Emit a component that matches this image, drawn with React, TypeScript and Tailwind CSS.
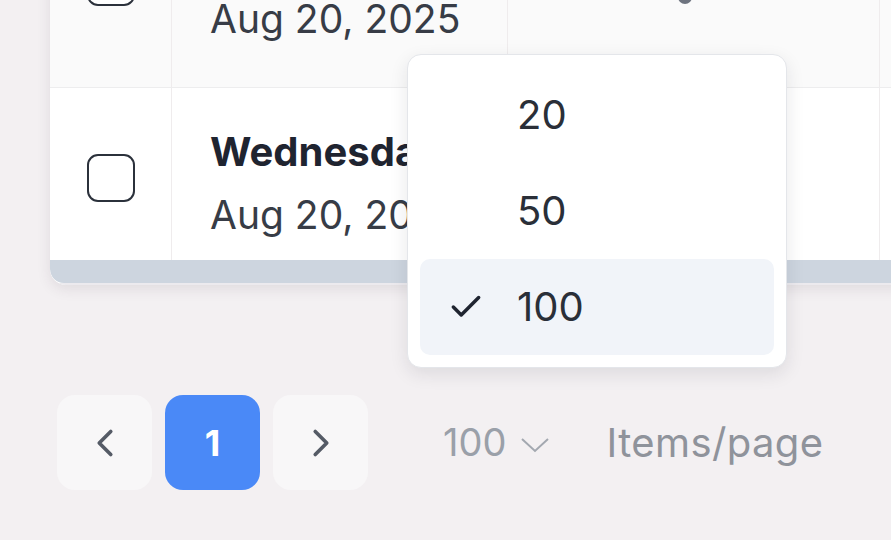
import { Check, ChevronLeft, ChevronRight } from "lucide-react";

const font = { fontFamily: "Inter, 'Noto Sans', sans-serif" };

const Checkbox = () => (
  <div className="w-[48px] h-[48px] rounded-[11px] border-[2.5px] border-[#2b313b] bg-white" />
);

const Row = ({ title, date, tinted }: { title: string; date: string; tinted?: boolean }) => (
  <div className={`flex h-[196px] shrink-0 border-b border-[#ededee] ${tinted ? "bg-[#fafafa]" : "bg-white"}`}>
    <div className="w-[122px] shrink-0 flex justify-center pt-[66px] border-r border-[#efeced]">
      <Checkbox />
    </div>
    <div className="w-[336px] shrink-0 pl-[38px] pt-[40px] border-r border-[#efeced] overflow-hidden whitespace-nowrap">
      <div className="text-[40px] leading-[48px] font-bold text-[#1f2430]">{title}</div>
      <div className="mt-[16px] text-[39px] leading-[46px] text-[#373c46]">{date}</div>
    </div>
    <div className="w-[372px] shrink-0 relative border-r border-[#efeced]">
      {tinted && (
        <div className="absolute left-[170px] top-[100px] w-[14px] h-[12px] rounded-b-full bg-[#4b5260] opacity-80" />
      )}
    </div>
    <div className="flex-1" />
  </div>
);

const MenuItem = ({ label, active }: { label: string; active?: boolean }) => (
  <div className={`flex items-center h-[96px] rounded-[10px] pl-[27px] ${active ? "bg-[#f1f4f9]" : ""}`}>
    <div className="w-[70px] shrink-0">
      {active && <Check size={38} strokeWidth={2.2} className="text-[#1f2430]" />}
    </div>
    <span className="text-[40px] text-[#2a2f38]">{label}</span>
  </div>
);

export default function App() {
  return (
    <div style={font} className="relative w-[891px] h-[540px] overflow-hidden bg-[#f3f0f2]">
      <div className="-mt-[108px] ml-[50px] w-[880px] rounded-b-[16px] bg-white shadow-[0_4px_14px_rgba(60,40,60,0.10)] overflow-hidden">
        <div className="h-[368px] flex flex-col overflow-hidden">
          <Row title="Tuesday" date="Aug 20, 2025" tinted />
          <Row title="Wednesday" date="Aug 20, 2025" />
        </div>
        <div className="h-[23px] bg-[#cdd5df] rounded-bl-[14px]" />
        <div className="h-[2px] bg-[#eceaee]" />
      </div>

      <div className="absolute left-[407px] top-[54px] w-[380px] h-[314px] p-[12px] rounded-[14px] border border-[#e4e6ea] bg-white shadow-[0_6px_18px_rgba(30,30,50,0.10)]">
        <MenuItem label="20" />
        <MenuItem label="50" />
        <MenuItem label="100" active />
      </div>

      <div className="flex items-center mt-[110px] ml-[57px]">
        <div className="flex gap-[13px]">
          <button className="w-[95px] h-[95px] rounded-[18px] bg-[#f8f7f8] flex items-center justify-center text-[#555b66]">
            <ChevronLeft size={46} strokeWidth={1.9} />
          </button>
          <button className="w-[95px] h-[95px] rounded-[18px] bg-[#4a89f7] flex items-center justify-center text-white text-[36px] font-bold">
            1
          </button>
          <button className="w-[95px] h-[95px] rounded-[18px] bg-[#f8f7f8] flex items-center justify-center text-[#555b66]">
            <ChevronRight size={46} strokeWidth={1.9} />
          </button>
        </div>
        <div className="ml-[75px] flex items-center text-[38px] text-[#9aa0a9]">
          <span>100</span>
          <svg width="30" height="18" viewBox="0 0 30 18" className="ml-[14px] mt-[4px]">
            <polyline points="2,3 15,15 28,3" fill="none" stroke="#a3a8b0" strokeWidth="2" />
          </svg>
        </div>
        <span className="ml-[56px] text-[40px] tracking-[0.01em] text-[#8f939b]">Items/page</span>
      </div>
    </div>
  );
}
